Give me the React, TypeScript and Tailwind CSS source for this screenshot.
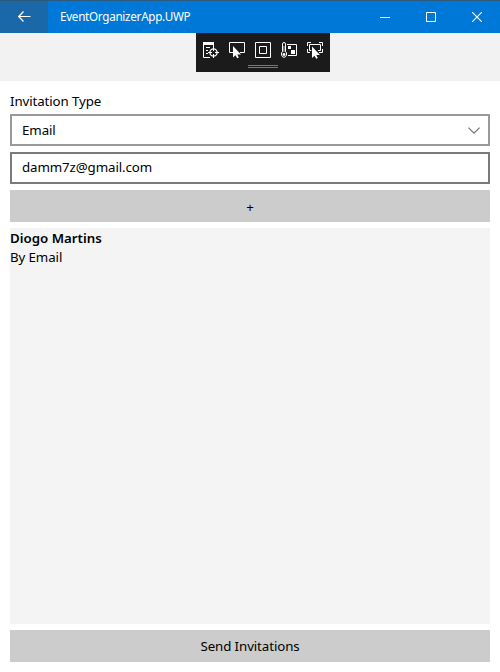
import React from "react";

const font = "font-['Segoe_UI','Noto_Sans','Open_Sans',sans-serif]";

const cursor = "M0 0V11.5L2.5 9.2L4.2 12.2L5.8 11.4L4.3 8.4H8Z";

function Icon({ children }: { children: React.ReactNode }) {
  return (
    <svg width="17" height="17" viewBox="0 0 17 17" fill="none" stroke="#fff">
      {children}
    </svg>
  );
}

function DebugToolbar() {
  return (
    <div className="flex h-[39px] w-[134px] flex-col bg-[#1b1b1b] pt-[9px]">
      <div className="flex gap-[9px] pl-[7px]">
        <Icon>
          <path d="M0 0H11V3H0Z" fill="#fff" stroke="none" />
          <path d="M.5 0V15.5H7M10.5 3V5M3 5.5H7M3 8.5H5M3 11.5H5" />
          <circle cx="10.5" cy="10.5" r="3.6" strokeWidth="1.3" />
          <path d="M10.5 5V9M10.5 12V16M5 10.5H9M12 10.5H16" />
        </Icon>
        <Icon>
          <path d="M4 10.5H.5V.5H15.5V10.5H11" />
          <path d={cursor} transform="translate(4 4)" fill="#fff" stroke="none" />
        </Icon>
        <Icon>
          <path d="M.5 .5H15.5V15.5H.5ZM4.5 4.5H11.5V11.5H4.5Z" />
        </Icon>
        <Icon>
          <path d="M1.5 9.5V2Q1.5 .5 3 .5T4.5 2V9.5Q6 10.6 5.5 13Q4.8 15.3 3 15.3T.6 13Q0 10.6 1.5 9.5Z" />
          <path d="M3 4V10" strokeOpacity=".7" />
          <circle cx="3" cy="12.5" r="1.4" fill="#fff" stroke="none" />
          <path d="M6 2.5H15.5V13.5H7" />
          <path d="M7 4H10V7H7ZM10 8H14V12H10Z" fill="#fff" stroke="none" />
        </Icon>
        <Icon>
          <path d="M.5 4V.5H4M12 .5H15.5V4M.5 7V10.5H3M15.5 7V10.5H12" />
          <path d="M5 8.5H2.5V2.5H13.5V8.5H11" />
          <path d={cursor} transform="translate(5 4.5)" fill="#fff" stroke="#1b1b1b" strokeWidth="1.4" paintOrder="stroke" />
        </Icon>
      </div>
      <div className="mt-[6px] ml-[52px] h-[3px] w-[30px] border-y border-[#777]" />
    </div>
  );
}

export default function App() {
  return (
    <div className={`flex h-[672px] w-[500px] flex-col bg-white text-[13.3px] leading-[19px] tracking-[-0.1px] text-black ${font}`}>
      <header className="flex h-[33px] shrink-0 border-t border-[#2b587b] bg-[#0078d7]">
        <button className="flex w-12 items-center justify-center bg-[#1b68a8]" aria-label="Back">
          <svg width="13" height="11" viewBox="0 0 13 11" fill="none" stroke="#fff" strokeWidth="1.2" className="mb-px">
            <path d="M.8 5.5H12.5M5.5 .5L.7 5.5L5.5 10.5" />
          </svg>
        </button>
        <span className="flex-1 pl-3 text-[11.7px] leading-[31px] tracking-[-0.29px] whitespace-nowrap text-white">EventOrganizerApp.UWP</span>
        <div className="flex">
          <button className="flex w-[46px] items-center justify-center" aria-label="Minimize">
            <svg width="10" height="10" viewBox="0 0 10 10" stroke="#fff">
              <path d="M0 5.5H10" />
            </svg>
          </button>
          <button className="flex w-[46px] items-center justify-center" aria-label="Maximize">
            <svg width="10" height="10" viewBox="0 0 10 10" fill="none" stroke="#fff">
              <path d="M.5 .5H9.5V9.5H.5Z" />
            </svg>
          </button>
          <button className="flex w-[46px] items-center justify-center" aria-label="Close">
            <svg width="10" height="10" viewBox="0 0 10 10" stroke="#fff" strokeWidth="1.2">
              <path d="M0 0L10 10M10 0L0 10" />
            </svg>
          </button>
        </div>
      </header>
      <div className="flex h-12 shrink-0 bg-[#f2f2f2] pl-[196px]">
        <DebugToolbar />
      </div>
      <main className="flex min-h-0 flex-1 flex-col gap-[6px] px-[10px] pt-[11px] pb-[10px]">
        <label className="-mb-[4px] h-5 shrink-0 leading-[19px]">Invitation Type</label>
        <div className="flex h-8 shrink-0 items-center justify-between border-2 border-[#999] pr-2 pl-[10px]">
          <span>Email</span>
          <svg width="12" height="7" viewBox="0 0 12 7" fill="none" stroke="#777" strokeWidth="1.2">
            <path d="M.4 .6L6 6.2L11.6 .6" />
          </svg>
        </div>
        <div className="flex h-8 shrink-0 items-center border-2 border-[#7a7a7a] pb-0.5 pl-[10px]">
          <span>damm7z@gmail.com</span>
        </div>
        <button className="h-8 shrink-0 bg-[#ccc] pt-0.5">+</button>
        <div className="min-h-0 flex-1 bg-[#f4f4f4] pt-px">
          <div className="font-semibold tracking-[0px]">Diogo Martins</div>
          <div>By Email</div>
        </div>
        <button className="h-8 shrink-0 bg-[#ccc]">Send Invitations</button>
      </main>
    </div>
  );
}
